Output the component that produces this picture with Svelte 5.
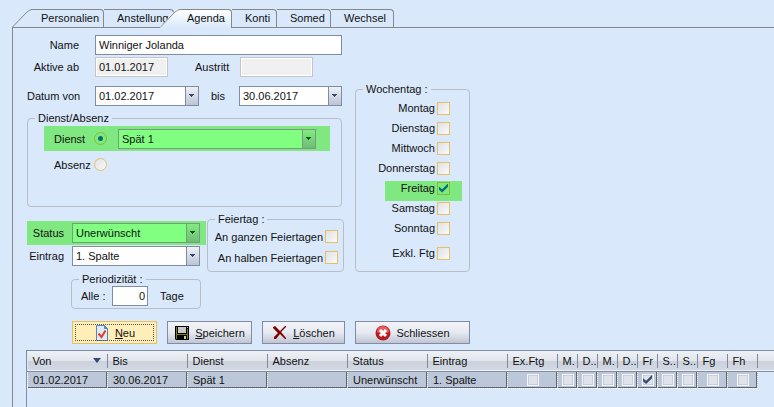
<script lang="ts">
	const tabs = [
		{ id: 'personalien', label: 'Personalien' },
		{ id: 'anstellung', label: 'Anstellung' },
		{ id: 'agenda', label: 'Agenda' },
		{ id: 'konti', label: 'Konti' },
		{ id: 'somed', label: 'Somed' },
		{ id: 'wechsel', label: 'Wechsel' }
	];

	let activeTab = $state('agenda');
	let kind = $state('dienst');
	let days = $state([
		{ label: 'Montag', checked: false },
		{ label: 'Dienstag', checked: false },
		{ label: 'Mittwoch', checked: false },
		{ label: 'Donnerstag', checked: false },
		{ label: 'Freitag', checked: true },
		{ label: 'Samstag', checked: false },
		{ label: 'Sonntag', checked: false },
		{ label: 'Exkl. Ftg', checked: false }
	]);

	const textColumns = ['Von', 'Bis', 'Dienst', 'Absenz', 'Status', 'Eintrag'];
	const flagColumns = ['Ex.Ftg', 'M.', 'D..', 'M.', 'D..', 'Fr', 'S..', 'S..', 'Fg', 'Fh'];

	const entries = [
		{
			cells: ['01.02.2017', '30.06.2017', 'Spät 1', '', 'Unerwünscht', '1. Spalte'],
			flags: [false, false, false, false, false, true, false, false, false, false]
		}
	];
</script>

{#snippet arrow()}
	<svg class="arrow" viewBox="0 0 12 18" aria-hidden="true">
		<path d="M3 7h5v1H7v1H6v1H5V9H4V8H3z" />
	</svg>
{/snippet}

<div class="page">
	<div class="tabs" role="tablist">
		{#each tabs as tab, i (tab.id)}
			<button
				class="tab"
				class:active={tab.id === activeTab}
				role="tab"
				aria-selected={tab.id === activeTab}
				onclick={() => (activeTab = tab.id)}
			>
				{#if i === 0 || tab.id === activeTab}
					<svg class="slant" viewBox="0 0 20 19" aria-hidden="true">
						<path d="M0 18.5L15 3Q18 .5 20 .5" />
					</svg>
				{/if}
				<span class="tab-label">{tab.label}</span>
			</button>
		{/each}
	</div>

	<main class="panel">
		<form class="form" onsubmit={(e) => e.preventDefault()}>
			<div class="left">
				<div class="row">
					<label class="label" for="name">Name</label>
					<input id="name" class="field grow" value="Winniger Jolanda" />
				</div>
				<div class="row dates">
					<label class="label" for="active">Aktive ab</label>
					<input id="active" class="field locked" value="01.01.2017" readonly />
					<label class="exit" for="exit">Austritt</label>
					<input id="exit" class="field locked" value="" readonly />
				</div>
				<div class="row range">
					<label class="label" for="from">Datum von</label>
					<span class="combo date">
						<input id="from" value="01.02.2017" />
						{@render arrow()}
					</span>
					<label class="until" for="to">bis</label>
					<span class="combo grow">
						<input id="to" value="30.06.2017" />
						{@render arrow()}
					</span>
				</div>

				<fieldset class="kind">
					<legend>Dienst/Absenz</legend>
					<div class="kind-row marked">
						<label for="dienst">Dienst</label>
						<input id="dienst" type="radio" value="dienst" bind:group={kind} />
						<span class="combo grow">
							<select aria-label="Dienst">
								<option>Spät 1</option>
							</select>
							{@render arrow()}
						</span>
					</div>
					<div class="kind-row">
						<label for="absenz">Absenz</label>
						<input id="absenz" type="radio" value="absenz" bind:group={kind} />
					</div>
				</fieldset>

				<div class="split">
					<div class="state">
						<div class="state-row marked">
							<label for="status">Status</label>
							<span class="combo grow">
								<select id="status">
									<option>Unerwünscht</option>
								</select>
								{@render arrow()}
							</span>
						</div>
						<div class="state-row">
							<label for="eintrag">Eintrag</label>
							<span class="combo grow">
								<select id="eintrag">
									<option>1. Spalte</option>
								</select>
								{@render arrow()}
							</span>
						</div>
					</div>
					<fieldset class="holidays">
						<legend>Feiertag :</legend>
						<label class="check">An ganzen Feiertagen <input type="checkbox" /></label>
						<label class="check">An halben Feiertagen <input type="checkbox" /></label>
					</fieldset>
				</div>

				<fieldset class="period">
					<legend>Periodizität :</legend>
					<div class="period-row">
						<label for="every">Alle :</label>
						<input id="every" class="field number" value="0" />
						<span class="unit">Tage</span>
					</div>
				</fieldset>
			</div>

			<fieldset class="weekdays">
				<legend>Wochentag :</legend>
				{#each days as day (day.label)}
					<label class="check" class:marked={day.checked}>
						{day.label}
						<input type="checkbox" bind:checked={day.checked} />
					</label>
				{/each}
			</fieldset>
		</form>

		<div class="actions">
			<button class="action focused">
				<svg class="icon" viewBox="0 0 16 16" aria-hidden="true">
					<path d="M2.500 .5h8l3 3v12h-11z" fill="#dcebfa" stroke="#5b83b5" />
					<path d="M10.500 .5v3h3z" fill="#6f9bd0" stroke="#5b83b5" />
					<path d="M4.500 8.500l3 3.500 4-6.500" fill="none" stroke="#f03a18" stroke-width="2" />
				</svg>
				<span><u>N</u>eu</span>
			</button>
			<button class="action">
				<svg class="icon" viewBox="0 0 16 16" aria-hidden="true">
					<path d="M1 1h14v14H2l-1-1z" fill="#000" />
					<path d="M2 2h1v12H2zM13 4h1v10h-1zM3 9h10v1H3z" fill="#808000" />
					<path d="M4 2h8v6H4zM10 11h2v3h-2zM13 2h1v1h-1z" fill="#c8c8c8" />
				</svg>
				<span><u>S</u>peichern</span>
			</button>
			<button class="action delete">
				<svg class="icon" viewBox="0 0 16 16" aria-hidden="true">
					<path
						d="M1 2l2-1 5 5 5-5h1v1L9 7l5 6v1h-1L8 9l-4 5H2v-2l4-4-5-5z"
						fill="#800000"
					/>
				</svg>
				<span><u>L</u>öschen</span>
			</button>
			<button class="action close">
				<svg class="icon" viewBox="0 0 16 16" aria-hidden="true">
					<circle cx="8" cy="8" r="7.500" fill="#b81c20" />
					<path d="M2 7a6 6 0 0 1 12 0Q8 10 2 7z" fill="#e46060" />
					<path d="M5 5l6 6M11 5l-6 6" stroke="#fff" stroke-width="3" />
				</svg>
				<span>Schliessen</span>
			</button>
		</div>

		<div class="list">
			<table>
				<colgroup>
					{#each textColumns as name (name)}
						<col class="col-text" />
					{/each}
					<col class="col-ex" />
					{#each flagColumns.slice(1, 8) as _}
						<col class="col-day" />
					{/each}
					<col class="col-half" />
					<col class="col-half" />
					<col />
				</colgroup>
				<thead>
					<tr>
						{#each textColumns as name, i (name)}
							<th>
								<span class="head">
									{name}
									{#if i === 0}
										<svg class="sort" viewBox="0 0 8 5" aria-hidden="true">
											<path d="M0 0h8L4 5z" />
										</svg>
									{/if}
								</span>
							</th>
						{/each}
						{#each flagColumns as name}
							<th><span class="head">{name}</span></th>
						{/each}
						<td></td>
					</tr>
				</thead>
				<tbody>
					{#each entries as entry}
						<tr>
							{#each entry.cells as cell}
								<td>{cell}</td>
							{/each}
							{#each entry.flags as flag, i}
								<td class="flag">
									<input type="checkbox" checked={flag} aria-label={flagColumns[i]} />
								</td>
							{/each}
						</tr>
					{/each}
				</tbody>
			</table>
		</div>
	</main>
</div>

<style>
	:global(body) {
		background: #d9e8fb;
	}

	.page {
		display: flex;
		flex-direction: column;
		box-sizing: border-box;
		min-height: 100vh;
		padding: 9px 0 0 12px;
		color: #111;
		font: 11px/14px 'Liberation Sans', Arial, sans-serif;
	}

	.page :global(*) {
		box-sizing: border-box;
	}

	button,
	input,
	select {
		margin: 0;
		color: inherit;
		font: inherit;
	}

	.tabs {
		display: grid;
		grid-template-columns: 92px 70px 58px 45px 54px 63px;
		height: 19px;
		margin-bottom: -1px;
	}

	.tab {
		display: flex;
		padding: 0;
		border: 0;
		background: none;
		text-align: left;
	}

	.slant {
		flex: none;
		width: 20px;
		height: 19px;
		fill: none;
		stroke: #85878b;
	}

	.tab-label {
		flex: 1;
		height: 18px;
		padding: 1px 0 0 13px;
		border: solid #85878b;
		border-width: 1px 1px 0 0;
		border-radius: 0 4px 0 0;
	}

	.slant + .tab-label {
		padding-left: 9px;
	}

	.active {
		z-index: 1;
		margin-left: -14px;
	}

	.active .slant {
		background: linear-gradient(#fff, #d9e8fb);
		clip-path: polygon(0 95%, 70% 15%, 85% 0, 100% 0, 100% 100%, 0 100%);
	}

	.active .tab-label {
		height: 19px;
		padding-left: 7px;
		background: linear-gradient(#fff, #d9e8fb);
	}

	.panel {
		display: flex;
		flex: 1;
		flex-direction: column;
		padding: 7px 0 0 14px;
		border: solid #85878b;
		border-width: 1px 0 0 1px;
	}

	.form {
		display: grid;
		grid-template-columns: 317px 115px;
		gap: 11px;
		align-items: start;
	}

	.row {
		display: flex;
		align-items: center;
		padding-right: 2px;
	}

	.label {
		width: 52px;
		margin-right: 16px;
		text-align: right;
		white-space: nowrap;
	}

	.grow {
		flex: 1;
		min-width: 0;
	}

	.field {
		height: 20px;
		padding: 0 3px;
		border: 1px solid #7f8ca3;
		background: #fff;
	}

	.locked {
		width: 73px;
		border: 1px solid #c3c5c8;
		background: #f0f0f0;
		box-shadow: inset 0 0 0 1px #fff;
	}

	.dates {
		margin-top: 2px;
	}

	.exit {
		width: 72px;
		padding-left: 27px;
	}

	.range {
		margin-top: 9px;
	}

	.until {
		width: 40px;
		padding-left: 12px;
	}

	.combo {
		display: grid;
		grid-template-columns: 1fr 13px;
		height: 20px;
		border: 1px solid #7f8ca3;
		background: #fff;
	}

	.date {
		width: 104px;
	}

	.combo input,
	.combo select {
		grid-row: 1;
		grid-column: 1 / -1;
		width: 100%;
		min-width: 0;
		padding: 0 16px 0 3px;
		border: 0;
		background: none;
		appearance: none;
	}

	.arrow {
		grid-row: 1;
		grid-column: 2;
		width: 13px;
		height: 18px;
		border-left: 1px solid #7f8ca3;
		background: linear-gradient(#eef1f6, #bcc3d3);
		fill: #34496f;
		pointer-events: none;
	}

	fieldset {
		min-width: 0;
		margin: 0;
		padding: 0;
		border: 1px solid #b9bdc8;
		border-radius: 4px;
	}

	legend {
		height: 14px;
		margin-left: 7px;
		padding: 0 3px;
	}

	.marked {
		background: #80e880;
	}

	.marked .combo {
		border-color: #7a9a80;
		background: #80ff80;
	}

	.marked .arrow {
		border-color: #7a9a80;
		background: linear-gradient(#80ec80, #70bc78);
		fill: #0a5a10;
	}

	.kind {
		height: 96px;
		margin: 5px 2px 0 0;
	}

	.kind-row {
		display: flex;
		align-items: center;
		height: 25px;
		margin: 1px 11px 0 16px;
		padding: 0 14px 0 10px;
	}

	.kind-row label {
		width: 40px;
	}

	.kind-row .combo {
		margin-left: 11px;
	}

	input[type='radio'],
	input[type='checkbox'] {
		display: grid;
		place-content: center;
		flex: none;
		width: 13px;
		height: 13px;
		border: 1px solid #e8c064;
		background: linear-gradient(135deg, #dfe1e6, #fafafa);
		appearance: none;
	}

	input[type='radio'] {
		border-radius: 50%;
	}

	input[type='radio']:checked::before {
		width: 5px;
		height: 5px;
		border-radius: 50%;
		background: #067070;
		content: '';
	}

	input[type='checkbox']:checked::before {
		width: 9px;
		height: 9px;
		background: #067070;
		clip-path: polygon(0 35%, 35% 65%, 100% 0, 100% 35%, 35% 100%, 0 70%);
		content: '';
	}

	.marked input[type='radio'],
	.marked input[type='checkbox'] {
		border-color: #80c030;
		background: #80e880;
	}

	.split {
		display: grid;
		grid-template-columns: 179px 137px;
		gap: 1px;
		margin-top: 5px;
	}

	.state {
		padding-top: 9px;
	}

	.state-row {
		display: flex;
		align-items: center;
		height: 22px;
		padding-right: 6px;
	}

	.state-row.marked {
		height: 24px;
	}

	.state-row label {
		width: 45px;
		padding-right: 8px;
		text-align: right;
	}

	.check {
		display: flex;
		align-items: center;
		justify-content: flex-end;
		gap: 2px;
		white-space: nowrap;
	}

	.holidays {
		height: 60px;
	}

	.holidays .check {
		height: 21px;
		padding-right: 5px;
	}

	.period {
		width: 130px;
		height: 37px;
		margin-left: 44px;
	}

	.period-row {
		display: flex;
		align-items: center;
		padding-left: 9px;
	}

	.period-row label {
		width: 31px;
	}

	.number {
		width: 36px;
		padding: 0 2px;
		text-align: right;
	}

	.unit {
		padding-left: 12px;
	}

	.weekdays {
		height: 190px;
		margin-top: 47px;
	}

	.weekdays .check {
		height: 20px;
		margin-right: 7px;
		padding-right: 12px;
	}

	.weekdays .marked {
		margin-left: 29px;
		background: linear-gradient(transparent 3px, #80e880 3px);
		box-shadow: 0 3px #80e880;
	}

	.weekdays legend + .check {
		margin-top: 2px;
	}

	.weekdays .check:last-child {
		margin-top: 5px;
	}

	.actions {
		display: flex;
		gap: 10px;
		margin: 12px 0 0 45px;
	}

	.action {
		display: flex;
		align-items: center;
		justify-content: center;
		gap: 5px;
		width: 85px;
		height: 23px;
		padding: 0;
		border: 1px solid #7f8ca3;
		background: linear-gradient(#f2f4f8, #e6e9f0 50%, #bfc5d3);
	}

	.delete {
		width: 83px;
	}

	.close {
		width: 115px;
	}

	.focused {
		border-color: #e8c064;
		background: #ffeeb8;
		outline: 1px dotted #555;
		outline-offset: -4px;
	}

	.icon {
		width: 16px;
		height: 16px;
	}

	.list {
		flex: 1;
		margin: 6px 0 0 -1px;
		border: solid #7f8ca3;
		border-width: 1px 0 0 1px;
		overflow: hidden;
	}

	table {
		width: 100%;
		table-layout: fixed;
		border-collapse: collapse;
	}

	.col-text {
		width: 80px;
	}

	.col-ex {
		width: 50px;
	}

	.col-day {
		width: 20px;
	}

	.col-half {
		width: 30px;
	}

	thead tr {
		height: 20px;
		border-bottom: 1px solid #7f8ca3;
		background: linear-gradient(#eef1f5, #e2e6ec 50%, #cbd2dd 55%, #d3d9e3);
	}

	th {
		padding: 0;
		font-weight: normal;
		text-align: left;
	}

	.head {
		display: flex;
		align-items: center;
		justify-content: space-between;
		height: 14px;
		padding: 0 6px 0 5px;
		border-right: 1px solid #7f8ca3;
		white-space: nowrap;
	}

	.sort {
		width: 8px;
		height: 5px;
		fill: #34496f;
	}

	tbody td {
		height: 17px;
		padding: 0 0 0 5px;
		border: 1px dotted #fff;
		border-top: 0;
		background: #bcc8d9;
		box-shadow: inset -1px -1px #5f6570;
		white-space: nowrap;
	}

	tbody .flag {
		padding: 0;
	}

	.flag input[type='checkbox'] {
		width: 12px;
		height: 12px;
		margin: 0 auto;
		border-color: #f4f6f9;
		background: #dfe4ec;
		box-shadow: inset 0 0 0 1px #c9ced8;
	}

	.flag input[type='checkbox']:checked::before {
		background: #34496f;
	}
</style>
